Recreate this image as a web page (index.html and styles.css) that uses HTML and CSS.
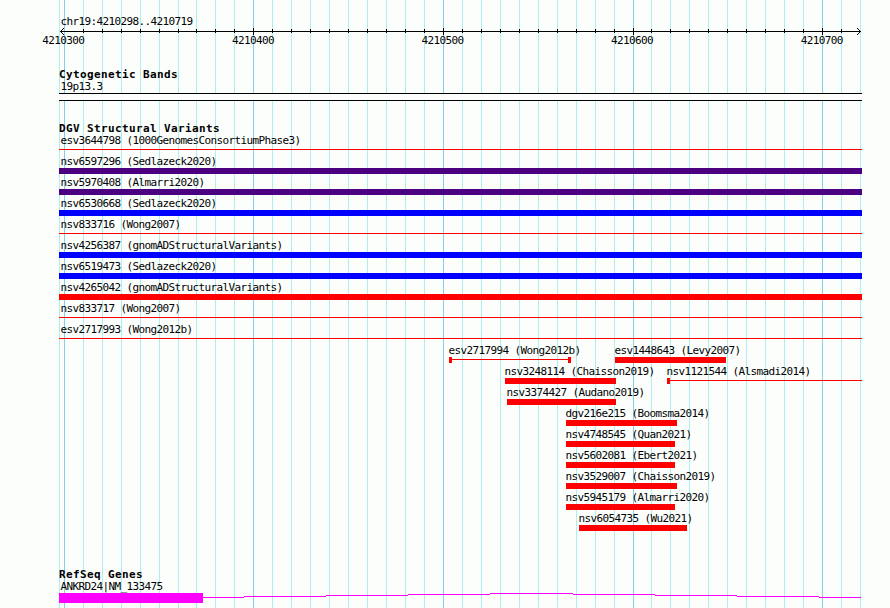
FILE: index.html
```html
<!DOCTYPE html>
<html lang="en">
<head>
<meta charset="utf-8">
<title>chr19:4210298..4210719</title>
<link rel="stylesheet" href="styles.css">
</head>
<body>
<main class="browser">
  <svg class="grid" id="grid" width="890" height="608" shape-rendering="crispEdges"></svg>
  <div class="tracks">
    <header class="ruler">
      <p class="label">chr19:4210298..4210719</p>
      <svg class="axis" id="axis" width="803" height="7" shape-rendering="crispEdges"></svg>
      <div class="numbers"><span>4210300</span><span>4210400</span><span>4210500</span><span>4210600</span><span>4210700</span></div>
    </header>
    <section class="bands">
      <h2>Cytogenetic Bands</h2>
      <p class="label">19p13.3</p>
      <div class="band"></div>
    </section>
    <section class="variants">
      <h2>DGV Structural Variants</h2>
      <div id="variants"></div>
    </section>
    <section class="genes">
      <h2>RefSeq Genes</h2>
      <p class="label">ANKRD24|NM_133475</p>
      <svg class="gene" width="803" height="16" shape-rendering="crispEdges">
        <path fill="#f0f" d="M0 1h144v10H0zM144 5h41v1h-41zM185 4h82v1h-82zM267 3h82v1h-82zM349 2h82v1h-82zM431 1h83v1h-83zM514 2h82v1h-82zM596 3h82v1h-82zM678 4h82v1h-82zM760 5h42v1h-42z"/>
      </svg>
    </section>
  </div>
</main>
<script src="app.js"></script>
</body>
</html>
```
FILE: styles.css
```css
* { box-sizing: border-box; }
body { margin: 0; background: #fcfefc; color: #000; }
h2, p { margin: 0; }
.browser {
  position: relative;
  width: 890px;
  height: 608px;
  overflow: hidden;
  font-family: "DejaVu Sans Mono", "Liberation Mono", monospace;
  font-size: 11px;
  line-height: 14px;
  letter-spacing: -0.622px;
  white-space: nowrap;
}
.grid { position: absolute; left: 0; top: 0; }
svg { display: block; }
.tracks { position: relative; width: 803px; margin-left: 59px; padding-top: 15px; }
.label { height: 12px; padding-left: 1.4px; }
.ruler { height: 53px; }
.axis { margin-top: 1px; overflow: visible; }
.numbers { display: flex; gap: 147.6px; margin: -1px 0 0 -16.7px; }
.numbers span { flex: none; width: 42px; }
h2 { height: 12px; font-size: 11px; line-height: 14px; font-weight: bold; letter-spacing: 0.378px; }
.bands { height: 54px; }
.band { height: 8px; margin-top: 1px; border: solid #000; border-width: 1px 0; background: #fcfefc; }
.variants { height: 446px; }
.row { display: flex; height: 21px; }
.item { flex: none; }
.item + .item, .item.inset { margin-left: var(--gap); }
.item.inset .label { padding-left: 0; margin-left: -0.6px; }
.bar { height: 6px; margin-top: 1px; background: #f00; }
.indigo { background: #4b0082; }
.blue { background: #00f; }
.thin { display: flex; background: linear-gradient(#f00, #f00) 0 2px / 100% 1px no-repeat; }
.start::before, .both::before, .both::after { content: ""; width: 3px; height: 6px; background: #f00; }
.both { justify-content: space-between; }
```
FILE: app.js
```js
const step = 800 / 422 * 10;
const gridX = k => Math.floor(64.295 + k * step);
const rect = (x, y, w, h, fill) => `<rect x="${x}" y="${y}" width="${w}" height="${h}" fill="${fill}"/>`;

let lines = rect(59, 0, 1, 608, '#afeeee');
let ticks = rect(1, 3, 801, 1, '#000');
for (let k = 0; k <= 42; k++) {
  const x = gridX(k);
  const major = k % 10 === 0;
  lines += rect(x, 0, 1, 608, major ? '#87ceeb' : '#afeeee');
  if (k > 0 && k < 42) ticks += major ? rect(x - 59, 0, 1, 7, '#000') : rect(x - 59, 1, 1, 4, '#000');
}
ticks += '<path d="M1 3h1v1H1zM2 2h1v3H2zM3 1h1v1H3zM3 5h1v1H3zM4 0h1v1H4zM4 6h1v1H4zM801 3h1v1h-1zM800 2h1v3h-1zM799 1h1v1h-1zM799 5h1v1h-1zM798 0h1v1h-1zM798 6h1v1h-1z"/>';
document.getElementById('grid').innerHTML = lines;
document.getElementById('axis').innerHTML = ticks;

// Each item: label, bar style, start, end
const rows = [
  [['esv3644798 (1000GenomesConsortiumPhase3)', 'thin', 59, 862]],
  [['nsv6597296 (Sedlazeck2020)', 'indigo', 59, 862]],
  [['nsv5970408 (Almarri2020)', 'indigo', 59, 862]],
  [['nsv6530668 (Sedlazeck2020)', 'blue', 59, 862]],
  [['nsv833716 (Wong2007)', 'thin', 59, 862]],
  [['nsv4256387 (gnomADStructuralVariants)', 'blue', 59, 862]],
  [['nsv6519473 (Sedlazeck2020)', 'blue', 59, 862]],
  [['nsv4265042 (gnomADStructuralVariants)', 'red', 59, 862]],
  [['nsv833717 (Wong2007)', 'thin', 59, 862]],
  [['esv2717993 (Wong2012b)', 'thin', 59, 862]],
  [['esv2717994 (Wong2012b)', 'thin both', 449, 571], ['esv1448643 (Levy2007)', 'red', 615, 726]],
  [['nsv3248114 (Chaisson2019)', 'red', 505, 616], ['nsv1121544 (Alsmadi2014)', 'thin start', 667, 862]],
  [['nsv3374427 (Audano2019)', 'red', 507, 616]],
  [['dgv216e215 (Boomsma2014)', 'red', 566, 677]],
  [['nsv4748545 (Quan2021)', 'red', 566, 675]],
  [['nsv5602081 (Ebert2021)', 'red', 566, 675]],
  [['nsv3529007 (Chaisson2019)', 'red', 566, 677]],
  [['nsv5945179 (Almarri2020)', 'red', 566, 675]],
  [['nsv6054735 (Wu2021)', 'red', 579, 687]]
];
document.getElementById('variants').innerHTML = rows.map(items => {
  let edge = 59;
  return '<div class="row">' + items.map(([name, style, start, end]) => {
    const html = `<div class="item${start > 59 ? ' inset' : ''}" style="--gap:${start - edge}px;width:${end - start}px"><p class="label">${name}</p><div class="bar ${style}"></div></div>`;
    edge = end;
    return html;
  }).join('') + '</div>';
}).join('');
```
